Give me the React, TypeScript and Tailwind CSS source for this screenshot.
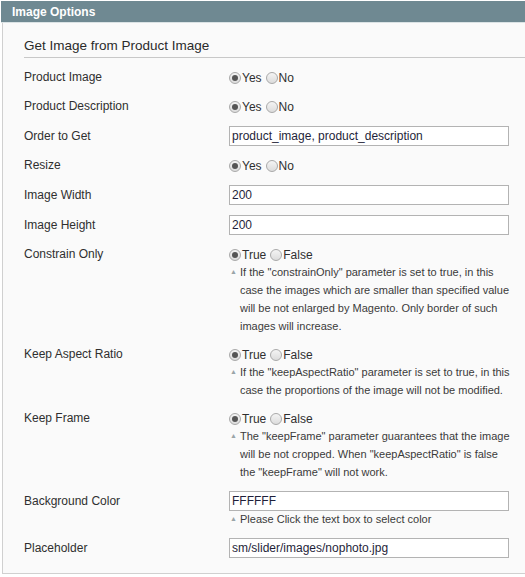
import React from 'react'

type Row =
  | { label: string; kind: 'radio'; options: string[]; notes?: string[] }
  | { label: string; kind: 'input'; value: string; notes?: string[] }

const rows: Row[] = [
  { label: 'Product Image', kind: 'radio', options: ['Yes', 'No'] },
  { label: 'Product Description', kind: 'radio', options: ['Yes', 'No'] },
  { label: 'Order to Get', kind: 'input', value: 'product_image, product_description' },
  { label: 'Resize', kind: 'radio', options: ['Yes', 'No'] },
  { label: 'Image Width', kind: 'input', value: '200' },
  { label: 'Image Height', kind: 'input', value: '200' },
  {
    label: 'Constrain Only',
    kind: 'radio',
    options: ['True', 'False'],
    notes: [
      'If the "constrainOnly" parameter is set to true, in this',
      'case the images which are smaller than specified value',
      'will be not enlarged by Magento. Only border of such',
      'images will increase.',
    ],
  },
  {
    label: 'Keep Aspect Ratio',
    kind: 'radio',
    options: ['True', 'False'],
    notes: [
      'If the "keepAspectRatio" parameter is set to true, in this',
      'case the proportions of the image will not be modified.',
    ],
  },
  {
    label: 'Keep Frame',
    kind: 'radio',
    options: ['True', 'False'],
    notes: [
      'The "keepFrame" parameter guarantees that the image',
      'will be not cropped. When "keepAspectRatio" is false',
      'the "keepFrame" will not work.',
    ],
  },
  {
    label: 'Background Color',
    kind: 'input',
    value: 'FFFFFF',
    notes: ['Please Click the text box to select color'],
  },
  { label: 'Placeholder', kind: 'input', value: 'sm/slider/images/nophoto.jpg' },
]

const Radio = ({ checked }: { checked: boolean }) => (
  <span className="mr-[1px] flex h-[12px] w-[12px] items-center justify-center rounded-full border border-[#a9a9a9] bg-gradient-to-b from-[#f4f4f4] to-[#dcdcdc]">
    {checked && <span className="h-[6px] w-[6px] rounded-full bg-[#555]" />}
  </span>
)

const Notes = ({ lines }: { lines: string[] }) => (
  <div className="mt-[-1px] flex text-[11px] leading-[18px] text-[#3a3a3a]">
    <span className="w-[11px] shrink-0 pl-[1px] text-[7px] text-[#9aa4a8]">▲</span>
    <div>
      {lines.map((l) => (
        <div key={l} className="whitespace-nowrap">
          {l}
        </div>
      ))}
    </div>
  </div>
)

const App = () => {
  return (
    <div className="h-[577px] w-[525px] overflow-hidden bg-white font-['Liberation_Sans',Arial,sans-serif] text-[#2f2f2f]">
      <div className="pl-[1px] pt-[1px]">
        {/* Header */}
        <div className="flex h-[22px] items-center border-b border-[#dbe3e5] bg-[#6f8992] pl-[11px] text-[12px] font-bold text-white">
          Image Options
        </div>

        {/* Body */}
        <div className="mr-[-4px] ml-[1px] h-[551px] border-b border-l border-[#d0d0d0] bg-[#fafafa] pl-[21px] pt-[14px]">
          <div className="border-b border-[#c8c8c8] pb-[2px] text-[13.5px] leading-[18px] text-[#2a2a2a]">
            Get Image from Product Image
          </div>

          <div className="pt-[5px]">
            {rows.map((row) => (
              <div key={row.label} className="flex py-[5px] text-[12px]">
                <div className={`w-[205px] shrink-0 ${row.kind === 'input' ? 'leading-[20px]' : 'leading-[19px]'}`}>
                  {row.label}
                </div>
                <div className="w-[280px]">
                  {row.kind === 'radio' ? (
                    <div className="flex h-[19px] items-center">
                      {row.options.map((o, i) => (
                        <span key={o} className={`flex items-center ${i > 0 ? 'ml-[4px]' : ''}`}>
                          <Radio checked={i === 0} />
                          <span className="text-[12px]">{o}</span>
                        </span>
                      ))}
                    </div>
                  ) : (
                    <div className="flex h-[20px] items-center border border-[#b3b3b3] bg-white pl-[2px] text-[12px] text-[#1f1f3a]">
                      {row.value}
                    </div>
                  )}
                  {row.notes && <Notes lines={row.notes} />}
                </div>
              </div>
            ))}
          </div>
        </div>
      </div>
    </div>
  )
}

export default App
